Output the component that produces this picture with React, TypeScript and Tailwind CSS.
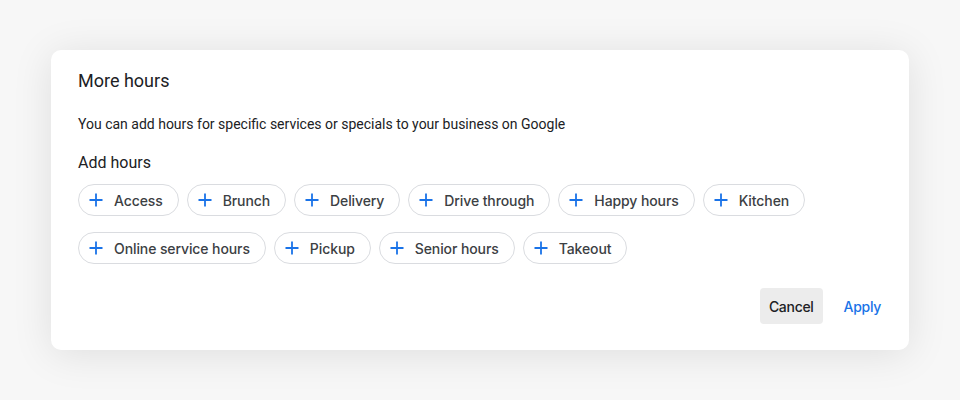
import React from "react";

const row1 = ["Access", "Brunch", "Delivery", "Drive through", "Happy hours", "Kitchen"];
const row2 = ["Online service hours", "Pickup", "Senior hours", "Takeout"];

function Plus() {
  return (
    <svg width="18" height="18" viewBox="0 0 18 18" className="shrink-0">
      <path d="M9 2.5v13M2.5 9h13" stroke="#1a73e8" strokeWidth="1.8" fill="none" />
    </svg>
  );
}

function Chip({ label }: { label: string }) {
  return (
    <button
      className="flex h-[32px] items-center gap-[9px] rounded-full border border-[#dadce0] bg-white pl-[8px] pr-[15px] text-[14px] font-medium tracking-[-0.1px] text-[#3c4043]"
      style={{ fontFamily: "Inter, Roboto, sans-serif" }}
    >
      <Plus />
      <span>{label}</span>
    </button>
  );
}

export default function App() {
  return (
    <div
      className="h-[400px] w-[960px] bg-[#f7f7f7] pl-[51px] pt-[50px]"
      style={{ fontFamily: "Roboto, 'Liberation Sans', sans-serif" }}
    >
      <div className="flex h-[300px] w-[858px] flex-col rounded-[10px] bg-white pl-[27px] pr-[20px] pt-[19px] shadow-[0_4px_40px_rgba(0,0,0,0.10)]">
        <div className="text-[18px] leading-[24px] text-[#202124]">More hours</div>
        <div className="mt-[21px] text-[14px] leading-[20px] text-[#202124]">
          You can add hours for specific services or specials to your business on Google
        </div>
        <div className="mt-[17px] text-[16px] leading-[24px] text-[#202124]">Add hours</div>
        <div className="mt-[9px] flex gap-[8px]">
          {row1.map((l) => (
            <Chip key={l} label={l} />
          ))}
        </div>
        <div className="mt-[16px] flex gap-[8px]">
          {row2.map((l) => (
            <Chip key={l} label={l} />
          ))}
        </div>
        <div
          className="mt-[24px] flex justify-end gap-[13px] tracking-[-0.3px]"
          style={{ fontFamily: "Inter, Roboto, sans-serif" }}
        >
          <button className="h-[36px] rounded-[4px] bg-[#ececec] px-[9px] text-[14px] font-medium text-[#202124]">
            Cancel
          </button>
          <button className="h-[36px] rounded-[4px] px-[8px] text-[14px] font-medium text-[#1a73e8]">
            Apply
          </button>
        </div>
      </div>
    </div>
  );
}
